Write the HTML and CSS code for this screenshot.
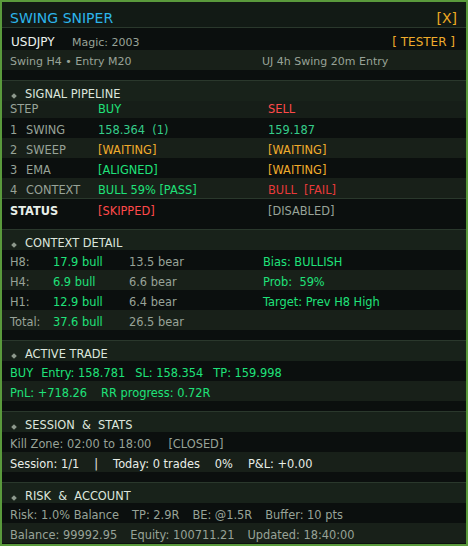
FILE: index.html
```html
<!DOCTYPE html>
<html lang="en">
<head>
    <meta charset="UTF-8">
    <title>Swing Sniper</title>
    <link rel="stylesheet" href="styles.css">
</head>
<body>
    <div class="panel">
        <div class="title-bar">
            <span class="title">SWING SNIPER</span>
            <span class="close">[X]</span>
        </div>

        <div class="info">
            <div class="row dark info-top">
                <span class="symbol">USDJPY</span>
                <span class="gray magic">Magic: 2003</span>
                <span class="orange mode">[ TESTER ]</span>
            </div>
            <div class="row light info-sub">
                <span class="gray">Swing H4 &bull; Entry M20</span>
                <span class="gray">UJ 4h Swing 20m Entry</span>
            </div>
        </div>

        <!-- Pipeline -->
        <section class="section">
            <div class="sec-head"><i class="dot"></i>SIGNAL PIPELINE</div>
            <div class="row step-head pipe">
                <span class="gray">STEP</span>
                <span class="green">BUY</span>
                <span class="red">SELL</span>
            </div>
            <div class="row dark pipe">
                <span class="gray"><b class="num">1</b>SWING</span>
                <span class="teal">158.364&nbsp;&nbsp;(1)</span>
                <span class="teal">159.187</span>
            </div>
            <div class="row light pipe">
                <span class="gray"><b class="num">2</b>SWEEP</span>
                <span class="orange">[WAITING]</span>
                <span class="orange">[WAITING]</span>
            </div>
            <div class="row dark pipe">
                <span class="gray"><b class="num">3</b>EMA</span>
                <span class="green">[ALIGNED]</span>
                <span class="orange">[WAITING]</span>
            </div>
            <div class="row light pipe">
                <span class="gray"><b class="num">4</b>CONTEXT</span>
                <span class="green">BULL 59% [PASS]</span>
                <span class="red-dim">BULL&nbsp;&nbsp;[FAIL]</span>
            </div>
            <div class="row dark pipe status">
                <span class="white strong">STATUS</span>
                <span class="red">[SKIPPED]</span>
                <span class="gray">[DISABLED]</span>
            </div>
        </section>

        <!-- Context detail -->
        <section class="section">
            <div class="sec-head"><i class="dot"></i>CONTEXT DETAIL</div>
            <div class="row dark ctx">
                <span class="gray">H8:</span>
                <span class="green">17.9 bull</span>
                <span class="gray">13.5 bear</span>
                <span class="green">Bias: BULLISH</span>
            </div>
            <div class="row light ctx">
                <span class="gray">H4:</span>
                <span class="green">6.9 bull</span>
                <span class="gray">6.6 bear</span>
                <span class="green">Prob:&nbsp;&nbsp;59%</span>
            </div>
            <div class="row dark ctx">
                <span class="gray">H1:</span>
                <span class="green">12.9 bull</span>
                <span class="gray">6.4 bear</span>
                <span class="green">Target: Prev H8 High</span>
            </div>
            <div class="row light ctx">
                <span class="gray">Total:</span>
                <span class="green">37.6 bull</span>
                <span class="gray">26.5 bear</span>
                <span></span>
            </div>
        </section>

        <!-- Trade -->
        <section class="section">
            <div class="sec-head"><i class="dot"></i>ACTIVE TRADE</div>
            <div class="row dark line green trade">
                <span class="side">BUY</span>
                <span>Entry: 158.781</span>
                <span>SL: 158.354</span>
                <span>TP: 159.998</span>
            </div>
            <div class="row light line green pnl">
                <span>PnL: +718.26</span>
                <span>RR progress: 0.72R</span>
            </div>
        </section>

        <!-- Session -->
        <section class="section">
            <div class="sec-head"><i class="dot"></i>SESSION&nbsp;&nbsp;&amp;&nbsp;&nbsp;STATS</div>
            <div class="row dark line gray kill">
                <span>Kill Zone: 02:00 to 18:00</span>
                <span>[CLOSED]</span>
            </div>
            <div class="row light line white session">
                <span>Session: 1/1</span>
                <span>|</span>
                <span>Today: 0 trades</span>
                <span>0%</span>
                <span>P&amp;L: +0.00</span>
            </div>
        </section>

        <!-- Risk -->
        <section class="section last">
            <div class="sec-head"><i class="dot"></i>RISK&nbsp;&nbsp;&amp;&nbsp;&nbsp;ACCOUNT</div>
            <div class="row dark line gray wide">
                <span>Risk: 1.0% Balance</span>
                <span>TP: 2.9R</span>
                <span>BE: @1.5R</span>
                <span>Buffer: 10 pts</span>
            </div>
            <div class="row light line gray wide">
                <span>Balance: 99992.95</span>
                <span>Equity: 100711.21</span>
                <span>Updated: 18:40:00</span>
            </div>
        </section>
    </div>
</body>
</html>
```

FILE: styles.css
```css
body {
    margin: 0;
    background: #0b0f0e;
    font-family: 'DejaVu Sans', sans-serif;
    font-size: 11.4px;
}

.panel {
    width: 468px;
    height: 546px;
    box-sizing: border-box;
    border: 2px solid #5a9a3c;
    background: #0b0f0e;
    overflow: hidden;
}

/* Header */
.title-bar {
    height: 26px;
    display: flex;
    align-items: flex-end;
    justify-content: space-between;
    padding: 0 9px 1px 8px;
    box-sizing: border-box;
    background: #121a15;
    border-bottom: 1px solid #2a382c;
}

.title {
    color: #2cb4ea;
    font-size: 14px;
}

.close {
    color: #eeaa22;
    font-size: 14px;
}

.info {
    padding-bottom: 10px;
    font-size: 11px;
}

.row {
    height: 20px;
    line-height: 20px;
    padding: 2px 0 0 8px;
    box-sizing: border-box;
    white-space: nowrap;
}

.dark { background: #0b0f0e; }
.light { background: #182019; }

.info-top {
    height: 22px;
    padding-top: 4px;
    display: flex;
    align-items: baseline;
    padding-right: 11px;
}

.symbol {
    color: #eef3ee;
    font-size: 12px;
    width: 61px;
    padding-left: 1px;
}

.magic {
    flex: 1;
}

.mode {
    font-size: 12px;
}

.info-sub {
    display: grid;
    grid-template-columns: 252px 1fr;
}

/* Sections */
.section {
    border-top: 1px solid #2a382c;
    padding-bottom: 10px;
}

.section.last {
    padding-bottom: 0;
}

.sec-head {
    height: 20px;
    line-height: 20px;
    padding: 3px 0 0 10px;
    box-sizing: border-box;
    background: #18221a;
    color: #dde6dd;
    display: flex;
    align-items: baseline;
}

.dot {
    width: 4px;
    height: 4px;
    background: #8d998d;
    transform: rotate(45deg);
    margin-right: 9px;
    align-self: flex-end;
    margin-bottom: 3px;
}

.step-head {
    height: 17px;
    line-height: 17px;
    padding-top: 0;
    background: #161e18;
}

.pipe {
    display: grid;
    grid-template-columns: 88px 170px 1fr;
}

.num {
    font-weight: normal;
    display: inline-block;
    width: 16px;
}

.status {
    height: 21px;
    border-top: 1px solid #2a382c;
}

.strong {
    font-weight: bold;
}

.ctx {
    display: grid;
    grid-template-columns: 43px 76px 134px 1fr;
}

.line {
    display: flex;
    gap: 13px;
}

.trade { gap: 10px; }
.trade .side { margin-right: -2px; }
.pnl { gap: 14px; }
.kill { gap: 17px; }
.session { gap: 15px; }

/* Text colours */
.gray { color: #98a398; }
.white { color: #e8eee8; }
.green { color: #1fe27a; }
.teal { color: #35cc8a; }
.orange { color: #f0ac2c; }
.red { color: #ff4a4a; }
.red-dim { color: #e83a3a; }
```
